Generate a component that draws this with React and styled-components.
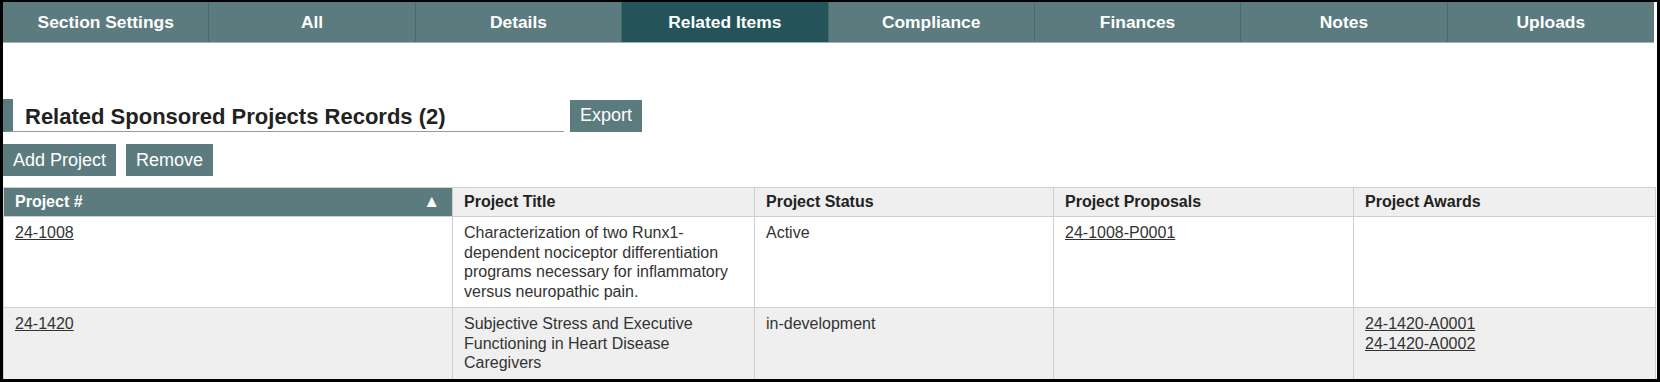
import React from "react";
import styled, { createGlobalStyle } from "styled-components";

const Global = createGlobalStyle`
  html, body { margin: 0; padding: 0; background: #000; }
  body { font-family: "Liberation Sans", Arial, sans-serif; }
  * { box-sizing: border-box; }
`;

const Frame = styled.div`
  height: 382px;
  border-style: solid;
  border-color: #000;
  border-width: 2px 3px 3px 3px;
  background: #fff;
  padding-right: 3px;
  overflow: hidden;
  color: #333;
`;

const Nav = styled.nav`
  display: grid;
  grid-template-columns: repeat(8, 1fr);
  height: 41px;
  background: #5b7b7e;
  border-bottom: 1px solid #9fb2b4;
`;

const Tab = styled.div`
  display: flex;
  align-items: center;
  justify-content: center;
  color: #fff;
  font-weight: bold;
  font-size: 17.4px;
  background: ${(p) => (p.$active ? "#245459" : "#5b7b7e")};
  border-right: ${(p) => (p.$last ? "none" : "1px solid #4a6b6e")};
`;

const HeadingRow = styled.div`
  display: flex;
  align-items: center;
  gap: 6px;
  margin-top: 56px;
`;

const Heading = styled.h2`
  margin: 0;
  width: 561px;
  height: 33px;
  display: flex;
  align-items: center;
  border-left: 10px solid #5b7b7e;
  border-bottom: 1px solid #9a9a9a;
  padding: 3px 0 0 12px;
  font-size: 22px;
  font-weight: bold;
  color: #222;
`;

const Button = styled.button`
  height: 32px;
  padding: 0 10px;
  border: none;
  background: #5b7b7e;
  color: #fff;
  font-family: "Liberation Sans", Arial, sans-serif;
  font-size: 18px;
  cursor: pointer;
`;

const ButtonRow = styled.div`
  display: flex;
  gap: 10px;
  margin-top: 12px;
`;

const Table = styled.table`
  margin-top: 11px;
  width: 1652px;
  border-collapse: collapse;
  table-layout: fixed;
  border: 1px solid #cfcfcf;
  font-size: 16px;
  line-height: 19.5px;
`;

const Th = styled.th`
  position: relative;
  text-align: left;
  font-weight: bold;
  height: 29px;
  padding: 0 11px;
  background: ${(p) => (p.$sorted ? "#5b7b7e" : "#efefef")};
  color: ${(p) => (p.$sorted ? "#fff" : "#222")};
  border: 1px solid #cfcfcf;
`;

const SortArrow = styled.span`
  position: absolute;
  right: 12px;
  top: 50%;
  transform: translateY(-50%);
  font-size: 17px;
  color: #fff;
`;

const Tr = styled.tr`
  background: ${(p) => (p.$alt ? "#efefef" : "#fff")};
`;

const Td = styled.td`
  vertical-align: top;
  padding: 6px 11px 6px 11px;
  border: 1px solid #cfcfcf;
  color: #333;
`;

const Link = styled.a`
  display: block;
  color: #333;
  text-decoration: underline;
`;

const tabs = [
  "Section Settings",
  "All",
  "Details",
  "Related Items",
  "Compliance",
  "Finances",
  "Notes",
  "Uploads",
];

const rows = [
  {
    id: "24-1008",
    title:
      "Characterization of two Runx1-dependent nociceptor differentiation programs necessary for inflammatory versus neuropathic pain.",
    status: "Active",
    proposals: ["24-1008-P0001"],
    awards: [],
  },
  {
    id: "24-1420",
    title: "Subjective Stress and Executive Functioning in Heart Disease Caregivers",
    status: "in-development",
    proposals: [],
    awards: ["24-1420-A0001", "24-1420-A0002"],
  },
];

export default function App() {
  return (
    <>
      <Global />
      <Frame>
        <Nav>
          {tabs.map((t, i) => (
            <Tab key={t} $active={t === "Related Items"} $last={i === tabs.length - 1}>
              {t}
            </Tab>
          ))}
        </Nav>
        <HeadingRow>
          <Heading>Related Sponsored Projects Records (2)</Heading>
          <Button>Export</Button>
        </HeadingRow>
        <ButtonRow>
          <Button>Add Project</Button>
          <Button>Remove</Button>
        </ButtonRow>
        <Table>
          <colgroup>
            <col style={{ width: 449 }} />
            <col style={{ width: 302 }} />
            <col style={{ width: 299 }} />
            <col style={{ width: 300 }} />
            <col style={{ width: 302 }} />
          </colgroup>
          <thead>
            <tr>
              <Th $sorted>
                Project #<SortArrow>▲</SortArrow>
              </Th>
              <Th>Project Title</Th>
              <Th>Project Status</Th>
              <Th>Project Proposals</Th>
              <Th>Project Awards</Th>
            </tr>
          </thead>
          <tbody>
            {rows.map((r, i) => (
              <Tr key={r.id} $alt={i % 2 === 1}>
                <Td>
                  <Link href="#">{r.id}</Link>
                </Td>
                <Td>{r.title}</Td>
                <Td>{r.status}</Td>
                <Td>
                  {r.proposals.map((p) => (
                    <Link key={p} href="#">{p}</Link>
                  ))}
                </Td>
                <Td>
                  {r.awards.map((a) => (
                    <Link key={a} href="#">{a}</Link>
                  ))}
                </Td>
              </Tr>
            ))}
          </tbody>
        </Table>
      </Frame>
    </>
  );
}
